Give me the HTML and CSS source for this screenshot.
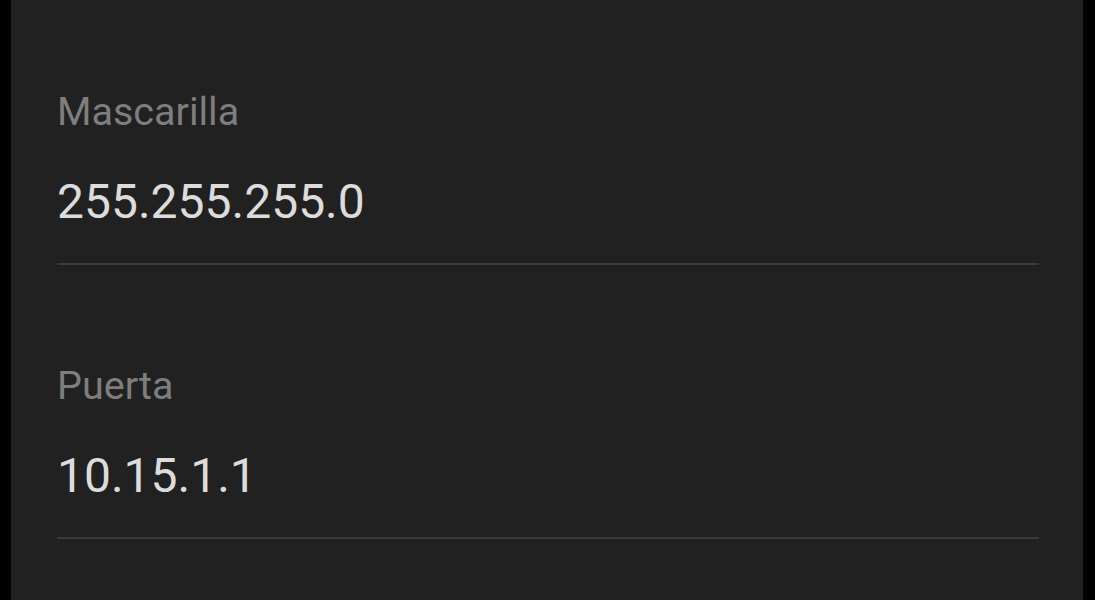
FILE: index.html
```html
<!DOCTYPE html>
<html lang="es">
<head>
<meta charset="utf-8">
<title>Red</title>
<link rel="stylesheet" href="styles.css">
</head>
<body>
<main class="panel">
  <section class="field">
    <div class="label">Mascarilla</div>
    <div class="value">255.255.255.0</div>
    <div class="divider"></div>
  </section>
  <section class="field">
    <div class="label">Puerta</div>
    <div class="value">10.15.1.1</div>
    <div class="divider"></div>
  </section>
</main>
</body>
</html>
```
FILE: styles.css
```css
html, body {
  margin: 0;
  padding: 0;
  background: #000;
  height: 100%;
  overflow: hidden;
}
body {
  font-family: Roboto, "Liberation Sans", sans-serif;
}
.panel {
  margin-left: 11px;
  width: 1072px;
  height: 600px;
  box-sizing: border-box;
  background: #212121;
  padding: 93px 44px 0 46px;
  display: flex;
  flex-direction: column;
  gap: 102px;
}
.field {
  display: flex;
  flex-direction: column;
}
.label {
  font-size: 39.5px;
  line-height: 38px;
  color: #7e7e7e;
}
.value {
  font-size: 48px;
  line-height: 48px;
  color: #dcdcdc;
  margin-top: 47px;
}
.divider {
  margin-top: 37px;
  height: 2px;
  background: #3b3b3b;
}
```
